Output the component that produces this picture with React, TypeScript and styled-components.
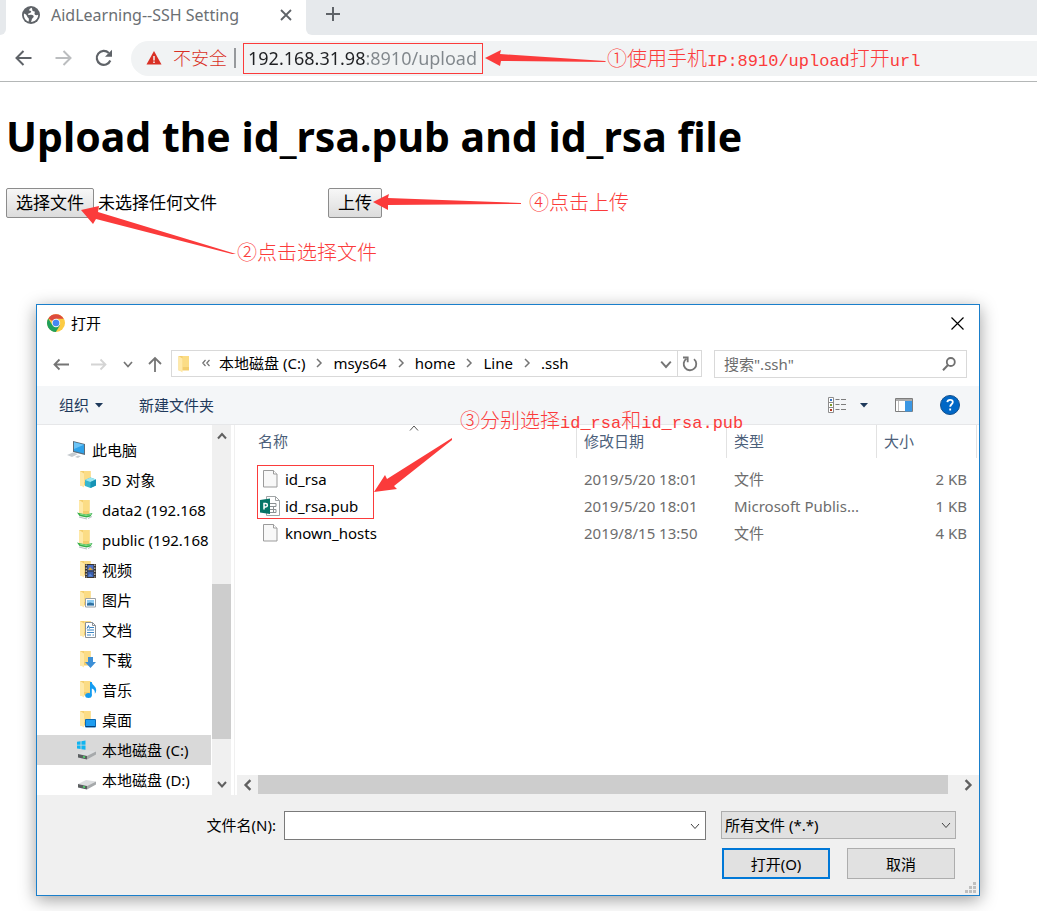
import React, { useRef } from 'react';
import styled, { createGlobalStyle, css } from 'styled-components';

const RED = '#fb3b3b';

const GlobalStyle = createGlobalStyle`
  * { box-sizing: border-box; }
  body {
    margin: 0;
    background: #fff;
    color: #000;
    font-family: "Noto Sans", "Noto Sans CJK SC", sans-serif;
    font-size: 15px;
    line-height: 20px;
  }
  button, input, select { font: inherit; color: inherit; }
`;

/* ---------- shared ---------- */

const IconButton = styled.button`
  display: flex;
  align-items: center;
  justify-content: center;
  flex: none;
  padding: 0;
  border: 0;
  background: none;
`;

const Icon = styled.svg`
  display: block;
  flex: none;
`;

const Note = styled.span`
  color: ${RED};
  font-family: "Noto Sans CJK SC", sans-serif;
  font-weight: 300;
  font-size: 20px;
  line-height: 24px;
  white-space: nowrap;
`;

const Mono = styled.span`
  font-family: "Liberation Mono", monospace;
  font-size: 17px;
`;

const Overlay = styled.div<{ $x: number; $y: number }>`
  position: absolute;
  left: ${(p) => p.$x}px;
  top: ${(p) => p.$y}px;
  display: flex;
  pointer-events: none;
`;

const Arrow = ({ w, h, points }: { w: number; h: number; points: string }) => (
  <Icon width={w} height={h} viewBox={`0 0 ${w} ${h}`} aria-hidden="true">
    <polygon points={points} fill={RED} />
  </Icon>
);

/* ---------- browser frame ---------- */

const TabStrip = styled.div`
  display: flex;
  height: 35px;
  background: #e6e9ec;
`;

const TabEdge = styled.div<{ $side: 'left' | 'right' }>`
  width: 6px;
  background: #fff;
  &::before {
    content: "";
    display: block;
    height: 100%;
    background: #e6e9ec;
    border-radius: ${(p) => (p.$side === 'left' ? '0 0 6px 0' : '0 0 0 8px')};
  }
`;

const Tab = styled.div`
  display: flex;
  align-items: center;
  width: 300px;
  padding: 0 14px 6px 15px;
  background: #fff;
  color: #6b6f73;
  font-size: 16px;
`;

const TabTitle = styled.span`
  flex: 1;
  margin-left: 10px;
  white-space: nowrap;
`;

const NewTab = styled(IconButton)`
  margin-left: 13px;
  padding-bottom: 7px;
`;

const Toolbar = styled.div`
  display: flex;
  align-items: center;
  height: 47px;
  padding-left: 14px;
  border-bottom: 1px solid #b4b7b7;
`;

const ToolButtons = styled.div`
  display: flex;
  gap: 20px;
  margin-right: 17px;
`;

const Omnibox = styled.div`
  display: flex;
  align-items: center;
  flex: 1;
  height: 35px;
  padding-left: 15px;
  border-radius: 18px 0 0 18px;
  background: #f1f3f4;
`;

const Insecure = styled.span`
  margin-left: 11px;
  color: #d93025;
  font-size: 18px;
  font-weight: 300;
`;

const Divider = styled.span`
  width: 2px;
  height: 20px;
  margin: 0 7px;
  background: #96999c;
`;

const UrlInput = styled.input`
  width: 240px;
  height: 31px;
  padding: 0 4px;
  border: 1px solid ${RED};
  outline: 0;
  font-size: 18px;
  color: transparent;
  background: linear-gradient(90deg, #202124 121px, #80868b 121px);
  background-clip: text;
  -webkit-background-clip: text;
`;

const UrlHint = styled.div`
  display: flex;
  align-items: center;
  padding-top: 4px;
`;

/* ---------- page ---------- */

const Heading = styled.h1`
  margin: 26px 6px 24px;
  font-size: 41px;
  line-height: 56px;
  font-weight: 700;
`;

const UploadForm = styled.form`
  position: relative;
  display: flex;
  align-items: center;
  margin: 0 6px;
`;

const FilePicker = styled.div`
  display: flex;
  align-items: center;
  gap: 4px;
  width: 322px;
  font-size: 17px;
`;

const HiddenFile = styled.input`
  display: none;
`;

const FormButton = styled.button`
  height: 30px;
  padding: 0 9px;
  border: 1px solid #8c8c8c;
  border-radius: 2px;
  background: linear-gradient(#f7f7f7, #dcdcdc);
  font-size: 17px;
`;

/* ---------- dialog ---------- */

const Dialog = styled.section`
  position: relative;
  margin: 86px 57px 15px 36px;
  border: 1px solid #1a7fcb;
  background: #fff;
  box-shadow: 0 4px 16px rgba(0, 0, 0, 0.38);
`;

const TitleBar = styled.header`
  display: flex;
  align-items: center;
  gap: 6px;
  height: 36px;
  padding: 0 15px 0 10px;
`;

const Title = styled.h2`
  flex: 1;
  margin: 0;
  font-size: 15px;
  font-weight: 400;
`;

const NavRow = styled.div`
  display: flex;
  align-items: center;
  height: 45px;
  padding: 0 12px 0 16px;
`;

const NavButtons = styled.div`
  display: flex;
  align-items: center;
  gap: 15px;
  margin-right: 9px;
`;

const AddressBar = styled.nav`
  display: flex;
  align-items: center;
  flex: 1;
  height: 27px;
  padding-left: 5px;
  border: 1px solid #d9d9d9;
`;

const Crumb = styled.button`
  padding: 0;
  border: 0;
  background: none;
  white-space: nowrap;
`;

const Crumbs = styled.div`
  display: flex;
  align-items: center;
  flex: 1;
  gap: 9px;
  margin-left: 11px;
  padding-bottom: 2px;
`;

const RefreshButton = styled(IconButton)`
  width: 24px;
  height: 25px;
  margin-left: 5px;
  border-left: 1px solid #d9d9d9;
`;

const SearchBox = styled.label`
  display: flex;
  align-items: center;
  width: 253px;
  height: 28px;
  margin-left: 12px;
  padding: 0 10px 0 9px;
  border: 1px solid #d9d9d9;
`;

const BareInput = styled.input`
  flex: 1;
  min-width: 0;
  height: 100%;
  padding: 0;
  border: 0;
  outline: 0;
  background: none;
  &::placeholder { color: #6d6d6d; opacity: 1; }
`;

const CommandBar = styled.div`
  display: flex;
  align-items: center;
  height: 39px;
  padding: 0 19px 0 22px;
  border-bottom: 1px solid #e6e7e9;
  background: #f4f6f8;
  color: #1e395b;
`;

const Command = styled.button`
  display: flex;
  align-items: center;
  gap: 6px;
  margin-right: 36px;
  padding: 0;
  border: 0;
  background: none;
`;

const CommandIcons = styled.div`
  display: flex;
  align-items: center;
  gap: 27px;
  margin-left: auto;
`;

const ViewButton = styled(IconButton)`
  gap: 14px;
`;

const DialogBody = styled.div`
  display: flex;
`;

const Tree = styled.ul`
  width: 174px;
  margin: 0;
  padding: 10px 0 0;
  list-style: none;
`;

const TreeRow = styled.li<{ $level: number; $selected?: boolean }>`
  display: flex;
  align-items: center;
  gap: 5px;
  height: 30px;
  padding-left: ${(p) => (p.$level === 0 ? 30 : 40)}px;
  background: ${(p) => (p.$selected ? '#d9d9d9' : 'transparent')};
  white-space: nowrap;
`;

const scroll = css`
  display: flex;
  flex: none;
  background: #f0f0f0;
`;

const VScroll = styled.div`
  ${scroll}
  flex-direction: column;
  width: 19px;
  margin: 0 3px 0 1px;
`;

const VThumb = styled.div`
  height: 155px;
  margin: auto 0 33px;
  background: #cdcdcd;
`;

const HScroll = styled.div`
  ${scroll}
  height: 20px;
  margin: auto 0 0 2px;
`;

const HThumb = styled.div`
  flex: 1;
  height: 19px;
  background: #cdcdcd;
`;

const ScrollButton = styled(IconButton)<{ $w: number; $h: number }>`
  width: ${(p) => p.$w}px;
  height: ${(p) => p.$h}px;
`;

const Files = styled.div`
  position: relative;
  display: flex;
  flex-direction: column;
  flex: 1;
  border-left: 1px solid #f0f0f0;
`;

const FileTable = styled.table`
  width: calc(100% - 2px);
  border-collapse: collapse;
  table-layout: fixed;
  color: #6d6d6d;
`;

const HeadCell = styled.th<{ $w?: number; $first?: boolean }>`
  width: ${(p) => (p.$w ? `${p.$w}px` : 'auto')};
  padding: 0 0 7px;
  text-align: left;
  font-weight: 400;
  color: #4c607a;
  & > div {
    height: 33px;
    padding: 6px 0 0 ${(p) => (p.$first ? 23 : 7)}px;
    border-right: 1px solid #e2e2e2;
  }
`;

const Cell = styled.td<{ $right?: boolean }>`
  height: 27px;
  padding: 0 10px 0 7px;
  text-align: ${(p) => (p.$right ? 'right' : 'left')};
  white-space: nowrap;
`;

const FileName = styled.div`
  display: flex;
  align-items: center;
  gap: 3px;
  padding-left: 18px;
  color: #000;
`;

const SortMark = styled.div`
  position: absolute;
  left: 174px;
  top: -2px;
`;

const Highlight = styled.div`
  position: absolute;
  left: 22px;
  top: 40px;
  width: 117px;
  height: 54px;
  border: 1px solid ${RED};
`;

const Footer = styled.footer`
  position: relative;
  padding: 16px 23px 16px 0;
  background: #f0f0f0;
`;

const FooterRow = styled.div`
  display: flex;
  align-items: flex-start;
`;

const NameLabel = styled.label`
  width: 239px;
  margin-right: 8px;
  line-height: 29px;
  text-align: right;
`;

const NameBox = styled.div`
  display: flex;
  flex: 1;
  height: 29px;
  margin-right: 15px;
  padding: 0 5px 0 4px;
  border: 1px solid #7a7a7a;
  background: #fff;
`;

const TypeBox = styled.div`
  position: relative;
  width: 235px;
`;

const TypeSelect = styled.select`
  width: 100%;
  height: 28px;
  padding: 0 3px;
  border: 1px solid #adadad;
  border-radius: 0;
  background: #e1e1e1;
  appearance: none;
`;

const SelectMark = styled.div`
  position: absolute;
  right: 5px;
  top: 9px;
  pointer-events: none;
`;

const Actions = styled.div`
  display: flex;
  justify-content: flex-end;
  gap: 17px;
  margin: 8px 1px 0 0;
`;

const ActionButton = styled.button<{ $primary?: boolean }>`
  width: 108px;
  height: 31px;
  padding: 0;
  border: ${(p) => (p.$primary ? '2px solid #0078d7' : '1px solid #adadad')};
  background: #e1e1e1;
`;

const Grip = styled.div`
  position: absolute;
  right: 3px;
  bottom: 2px;
`;

/* ---------- icons ---------- */

const Chevron = ({ dir, size = 10, color = '#606060', stroke = 2 }: { dir: 'up' | 'down' | 'left' | 'right'; size?: number; color?: string; stroke?: number }) => {
  const d = { up: 'M1 7.5 5 3 9 7.5', down: 'M1 3 5 7.5 9 3', left: 'M7 1 3 5 7 9', right: 'M3 1 7 5 3 9' }[dir];
  return (
    <Icon width={size} height={size} viewBox="0 0 10 10" fill="none" stroke={color} strokeWidth={stroke}>
      <path d={d} />
    </Icon>
  );
};

const Triangle = () => (
  <Icon width="8" height="5" viewBox="0 0 8 5"><path d="M0 0h8L4 4.5z" fill="#1e395b" /></Icon>
);

const FolderShape = () => (
  <>
    <path d="M2 1h10.500v14.500H2z" fill="#f3cd6c" />
    <path d="M6 1h6.500v11H6z" fill="#fbdc85" />
    <path d="M2 1l4 2.500v14L2 15z" fill="#ffe9a8" />
  </>
);

const overlays: Record<string, React.ReactNode> = {
  cube: (
    <>
      <path d="M7 10l5.500-2.500L18 9.500v6L12.500 18 7 16z" fill="#35b6cf" />
      <path d="M7 10l5.500 2 5.500-2.500-5.500-2z" fill="#9be6f0" />
      <path d="M12.500 12v6L18 15.500v-6z" fill="#1793b5" />
    </>
  ),
  net: (
    <>
      <path d="M0 12.500l3 .8 6 1.200 6.500-1.500-2 3.500-4 1-7-1.500z" fill="#36b04a" />
      <path d="M3 14l6 1.500 5-1" stroke="#8be08f" fill="none" />
      <path d="M2 17l8 2M11 18.500l4-2" stroke="#b6bcc0" fill="none" />
    </>
  ),
  film: (
    <>
      <path d="M7 4h11v14H7z" fill="#39342f" />
      <path d="M9.500 5h6v5.500h-6z" fill="#4b6fc4" />
      <path d="M9.500 11.500h6v5.500h-6z" fill="#3b5fae" />
      <path d="M10 10l2-3 3 3z" fill="#d8a43c" />
      <path d="M10 16.500l2-3 3 3z" fill="#5b8ad8" />
      <path d="M8.200 4.500v13M16.800 4.500v13" stroke="#e8e6e0" strokeDasharray="1.500 1.500" />
    </>
  ),
  picture: (
    <>
      <path d="M7.500 8.500h10v8.500h-10z" fill="#fff" stroke="#9aa0a6" />
      <path d="M9 10h7v5.500H9z" fill="#8ccbf2" />
      <path d="M9 13.500l3-1 4 1v2H9z" fill="#2f6f9f" />
    </>
  ),
  doc: (
    <>
      <path d="M7.500 2.500h7l3 3v12h-10z" fill="#fff" stroke="#8b9197" />
      <path d="M14.500 2.500v3h3" fill="none" stroke="#8b9197" />
      <path d="M12 7.500h4M9 10h7M9 12.500h7M9 15h4M14.500 15H16" stroke="#3b85c4" />
      <path d="M9 8.500l1.500-3 1 3" fill="none" stroke="#2672b8" />
    </>
  ),
  down: <path d="M10 7h5v5h3l-5.500 6L7 12h3z" fill="#3d8fd6" />,
  music: (
    <>
      <ellipse cx="10.500" cy="15.500" rx="3.300" ry="2.500" fill="#149cf0" />
      <path d="M12 2h1.800c.4 3.500 4.400 4 4.400 8 0 1.500-.6 3-1.400 3.700.5-3.500-1.300-4.700-3-5.200v7H12z" fill="#149cf0" />
    </>
  ),
  desktop: (
    <>
      <path d="M7.500 9.500h10v7.500h-10z" fill="#1e9df0" stroke="#0b6ab5" />
      <path d="M8 16.500h9" stroke="#0d3f73" />
    </>
  ),
};

const DriveShape = () => (
  <>
    <path d="M1 14l8-4 10 1.500-9 4.500z" fill="#dcdee0" />
    <path d="M1 14l9 2v3.500l-9-2z" fill="#5a5e60" />
    <path d="M10 16l9-4.500v3L10 19.500z" fill="#a6a9ab" />
    <path d="M6 16.800l2 .5" stroke="#4be36a" strokeWidth="1.500" />
  </>
);

const TreeIcon = ({ kind }: { kind: string }) => {
  if (kind === 'pc') {
    return (
      <Icon width="20" height="20" viewBox="0 0 20 20">
        <path d="M6 1l12 3v11L6 12z" fill="#5c6d7a" />
        <path d="M7 2.300l10 2.500v8.700L7 11z" fill="#2ea2ea" />
        <path d="M7 2.300l10 2.500L7 9z" fill="#6cc4f7" />
        <path d="M0 15l6-2.500 5 1.500-6 3zM8 17l3-1.500 3 .5-3 2z" fill="#c6cbcf" />
      </Icon>
    );
  }
  if (kind === 'drive' || kind === 'windrive') {
    return (
      <Icon width="20" height="20" viewBox="0 0 20 20">
        <DriveShape />
        {kind === 'windrive' && <path d="M0 1.800l3.600-.5v3.500H0zM4.400 1.200L8.500.6v4.200H4.400zM0 5.600h3.600v3.500L0 8.600zM4.400 5.600h4.100v4.200l-4.100-.6z" fill="#10b4f0" />}
      </Icon>
    );
  }
  return (
    <Icon width="20" height="20" viewBox="0 0 20 20">
      {kind === 'net' ? <g transform="translate(0 -1)"><FolderShape /></g> : <g transform="translate(1 0)"><FolderShape /></g>}
      {kind === 'net' ? overlays[kind] : <g transform="translate(1 0)">{overlays[kind]}</g>}
    </Icon>
  );
};

const FileIcon = ({ publisher }: { publisher?: boolean }) => (
  <Icon width="22" height="20" viewBox="0 0 22 20">
    {publisher ? (
      <>
        <path d="M6.500.5h9l4 4v15h-13z" fill="#fff" stroke="#a0a4a6" />
        <path d="M15.500.5v4h4" fill="none" stroke="#a0a4a6" />
        <path d="M10 7.500h6v3h-6M10 13.500h6M10 16.500h6v-3M13.500 10.500v6" fill="none" stroke="#8c9194" />
        <path d="M0 4l10-1.500v15.500L0 16.500z" fill="#077568" />
        <path d="M4 13.500V7.500h1.700a1.700 1.700 0 010 3.400H4" fill="none" stroke="#fff" strokeWidth="1.500" />
      </>
    ) : (
      <>
        <path d="M3.500 1.500h10l3.500 3.500v13H3.500z" fill="#f8f8f8" stroke="#9b9b9b" />
        <path d="M13.500 1.500V5H17" fill="#fff" stroke="#9b9b9b" />
      </>
    )}
  </Icon>
);

/* ---------- data ---------- */

const treeItems = [
  { kind: 'pc', label: '此电脑', level: 0 },
  { kind: 'cube', label: '3D 对象', level: 1 },
  { kind: 'net', label: 'data2 (192.168', level: 1 },
  { kind: 'net', label: 'public (192.168', level: 1 },
  { kind: 'film', label: '视频', level: 1 },
  { kind: 'picture', label: '图片', level: 1 },
  { kind: 'doc', label: '文档', level: 1 },
  { kind: 'down', label: '下载', level: 1 },
  { kind: 'music', label: '音乐', level: 1 },
  { kind: 'desktop', label: '桌面', level: 1 },
  { kind: 'windrive', label: '本地磁盘 (C:)', level: 1, selected: true },
  { kind: 'drive', label: '本地磁盘 (D:)', level: 1 },
];

const files = [
  { name: 'id_rsa', date: '2019/5/20 18:01', type: '文件', size: '2 KB' },
  { name: 'id_rsa.pub', date: '2019/5/20 18:01', type: 'Microsoft Publis...', size: '1 KB', publisher: true },
  { name: 'known_hosts', date: '2019/8/15 13:50', type: '文件', size: '4 KB' },
];

const crumbs = ['本地磁盘 (C:)', 'msys64', 'home', 'Line', '.ssh'];

/* ---------- sections ---------- */

const BrowserFrame = () => (
  <header>
    <TabStrip>
      <TabEdge $side="left" />
      <Tab>
        <Icon width="20" height="20" viewBox="0 0 20 20">
          <circle cx="10" cy="10" r="9" fill="#5f6368" />
          <path d="M10.500 2.800c-1 .6-2.600 1.500-2.200 2.500.3.800 1.600.3 1.900 1.200.3 1-1.700 1.600-2.700 2-.9.500-.4 1.700.6 1.500 1.700-.3 3.200-.6 4.200.5.8 1 .3 2-.6 2.600-1 .7-.9 2.200-1.700 3.900 4-.2 7.200-3.200 7.200-7.200-1.300.8-3 .6-3.600-.5-.5-1 .7-1.800 0-2.700-.7-.8-1.800-.3-2.200-1.200-.3-.9.200-1.700-.9-2.600z" fill="#fff" />
          <path d="M3 8.500c1.500.3 2.800 1.500 3.200 3 .3 1.400 1.600 1.300 1.700 2.500l-.2 2.600C4.600 15.700 2.300 12.500 3 8.500z" fill="#fff" />
        </Icon>
        <TabTitle>AidLearning--SSH Setting</TabTitle>
        <IconButton aria-label="关闭标签页">
          <Icon width="12" height="12" viewBox="0 0 12 12" stroke="#5f6368" strokeWidth="1.800"><path d="M1 1l10 10M11 1L1 11" /></Icon>
        </IconButton>
      </Tab>
      <TabEdge $side="right" />
      <NewTab aria-label="新标签页">
        <Icon width="16" height="16" viewBox="0 0 16 16" stroke="#5f6368" strokeWidth="2"><path d="M8 1v14M1 8h14" /></Icon>
      </NewTab>
    </TabStrip>
    <Toolbar>
      <ToolButtons>
        <IconButton aria-label="后退">
          <Icon width="20" height="20" viewBox="0 0 20 20" fill="none" stroke="#5f6368" strokeWidth="2"><path d="M17.500 10H3M9.500 3L2.500 10l7 7" /></Icon>
        </IconButton>
        <IconButton aria-label="前进">
          <Icon width="20" height="20" viewBox="0 0 20 20" fill="none" stroke="#bbbdbf" strokeWidth="2"><path d="M1.500 10H16M9.500 3l7 7-7 7" /></Icon>
        </IconButton>
        <IconButton aria-label="重新加载">
          <Icon width="20" height="20" viewBox="0 0 20 20" fill="none" stroke="#5f6368" strokeWidth="2.200">
            <path d="M16.300 12.500A7 7 0 1 1 14.800 5" />
            <path d="M18 1.800v7h-7z" fill="#5f6368" stroke="none" />
          </Icon>
        </IconButton>
      </ToolButtons>
      <Omnibox>
        <Icon width="16" height="16" viewBox="0 0 16 16">
          <path d="M8 1l7.500 13.500H.5z" fill="#d93025" />
          <path d="M8 6v4.500M8 11.500v1.500" stroke="#f1f3f4" strokeWidth="1.500" />
        </Icon>
        <Insecure>不安全</Insecure>
        <Divider />
        <UrlInput aria-label="地址" defaultValue="192.168.31.98:8910/upload" spellCheck={false} />
        <Arrow w={124} h={18} points="2,9 18,1 17,5 122,12 123,13 18,12 17,17" />
        <UrlHint>
          <Note>①使用手机<Mono>IP:8910/upload</Mono>打开<Mono>url</Mono></Note>
        </UrlHint>
      </Omnibox>
    </Toolbar>
  </header>
);

const UploadSection = () => {
  const picker = useRef<HTMLInputElement>(null);
  return (
    <UploadForm onSubmit={(e) => e.preventDefault()}>
      <FilePicker>
        <FormButton type="button" onClick={() => picker.current?.click()}>选择文件</FormButton>
        <HiddenFile ref={picker} type="file" aria-label="选择文件" />
        <span>未选择任何文件</span>
      </FilePicker>
      <FormButton type="submit">上传</FormButton>
      <Overlay $x={366} $y={5}>
        <Arrow w={152} h={18} points="1,9 17,1 16,5 149,10 149,11 16,12 16,17" />
      </Overlay>
      <Overlay $x={523} $y={2}><Note>④点击上传</Note></Overlay>
      <Overlay $x={74} $y={17}>
        <Arrow w={156} h={52} points="1,5 19,1 18,7 156,49 152,49 16,14 13,19" />
      </Overlay>
      <Overlay $x={231} $y={52}><Note>②点击选择文件</Note></Overlay>
    </UploadForm>
  );
};

const OpenDialog = () => (
  <Dialog role="dialog" aria-labelledby="dialog-title">
    <TitleBar>
      <Icon width="18" height="18" viewBox="0 0 18 18">
        <circle cx="9" cy="9" r="9" fill="#fccb43" />
        <path d="M9 9L1.200 4.500A9 9 0 0 1 16.800 4.800H9z" fill="#dd4b3e" />
        <path d="M1.200 4.500A9 9 0 0 0 8.800 18L13 11.200 9 9 5.300 11z" fill="#1fa05c" />
        <circle cx="9" cy="9" r="4.200" fill="#f3f3f3" />
        <circle cx="9" cy="9" r="3.300" fill="#4687f1" />
      </Icon>
      <Title id="dialog-title">打开</Title>
      <IconButton aria-label="关闭">
        <Icon width="13" height="13" viewBox="0 0 13 13" stroke="#000" strokeWidth="1.200"><path d="M.5.5l12 12M12.500.5l-12 12" /></Icon>
      </IconButton>
    </TitleBar>

    <NavRow>
      <NavButtons>
        <IconButton aria-label="返回">
          <Icon width="16" height="16" viewBox="0 0 16 16" fill="none" stroke="#757575" strokeWidth="1.800"><path d="M16 8.500H1.500M6.500 3.500l-5 5 5 5" /></Icon>
        </IconButton>
        <IconButton aria-label="前进">
          <Icon width="24" height="16" viewBox="-7 0 24 16" fill="none" stroke="#d4d4d4" strokeWidth="1.800"><path d="M0 8.500h14.500M9.500 3.500l5 5-5 5" /></Icon>
        </IconButton>
        <IconButton aria-label="最近位置"><Chevron dir="down" color="#757575" stroke={1.700} /></IconButton>
        <IconButton aria-label="上移">
          <Icon width="14" height="16" viewBox="0 0 14 16" fill="none" stroke="#757575" strokeWidth="1.800"><path d="M7 16V2M1 8l6-6 6 6" /></Icon>
        </IconButton>
      </NavButtons>
      <AddressBar aria-label="路径">
        <Icon width="14" height="18" viewBox="1 0 13 18"><FolderShape /></Icon>
        <Crumbs>
          <Icon width="8" height="8" viewBox="0 0 8 8" fill="none" stroke="#707070" strokeWidth="1.200"><path d="M3.500 1L.8 4l2.700 3M7.500 1L4.800 4l2.700 3" /></Icon>
          {crumbs.map((c, i) => (
            <React.Fragment key={c}>
              {i > 0 && <Chevron dir="right" color="#757575" stroke={1.500} />}
              <Crumb>{c}</Crumb>
            </React.Fragment>
          ))}
        </Crumbs>
        <IconButton aria-label="展开"><Chevron dir="down" size={12} color="#757575" stroke={1.600} /></IconButton>
        <RefreshButton aria-label="刷新">
          <Icon width="16" height="16" viewBox="0 0 16 16" fill="none" stroke="#757575" strokeWidth="1.800">
            <path d="M4.500 2.700a6.300 6.300 0 1 0 7.500.4" />
            <path d="M1 1.500h4.700v4.700" />
          </Icon>
        </RefreshButton>
      </AddressBar>
      <SearchBox>
        <BareInput aria-label="搜索" placeholder={'搜索".ssh"'} />
        <Icon width="14" height="14" viewBox="0 0 14 14" fill="none" stroke="#707070" strokeWidth="1.800">
          <circle cx="8.800" cy="5" r="4" />
          <path d="M6 8L1 13.200" strokeWidth="2" />
        </Icon>
      </SearchBox>
    </NavRow>

    <CommandBar>
      <Command>组织<Triangle /></Command>
      <Command>新建文件夹</Command>
      <CommandIcons>
        <ViewButton aria-label="更改视图">
          <Icon width="18" height="16" viewBox="0 0 18 16">
            <path d="M.5.5h5v15h-5zM.5 5.500h5M.5 10.500h5" fill="#fff" stroke="#8d8d8d" />
            <path d="M2 2h2v2H2z" fill="#3774c4" /><path d="M2 7h2v2H2z" fill="#7c9a2b" /><path d="M2 12h2v2H2z" fill="#b5371d" />
            <path d="M7.500 2.500h4M13 2.500h5M7.500 7.500h4M13 7.500h5M7.500 12.500h4M13 12.500h5" stroke="#7d7d7d" />
          </Icon>
          <Triangle />
        </ViewButton>
        <IconButton aria-label="预览窗格">
          <Icon width="18" height="14" viewBox="0 0 18 14">
            <path d="M.5.5h17v13H.5z" fill="#fff" stroke="#7d7d7d" />
            <path d="M1 2h16" stroke="#8f8f8f" strokeWidth="1.500" />
            <path d="M3.500 3v10" stroke="#bdbdbd" />
            <path d="M10 3h7v10.500h-7z" fill="#3b97e3" />
          </Icon>
        </IconButton>
        <IconButton aria-label="帮助">
          <Icon width="20" height="20" viewBox="0 0 20 20">
            <circle cx="10" cy="10" r="9.500" fill="#0067c6" stroke="#134f8c" />
            <path d="M7.300 7.200c.2-1.600 1.300-2.400 2.800-2.400s2.700.9 2.700 2.300c0 2.100-2.600 2.200-2.600 4.600M10.200 13.500v1.900" fill="none" stroke="#fff" strokeWidth="1.800" />
          </Icon>
        </IconButton>
      </CommandIcons>
    </CommandBar>

    <DialogBody>
      <Tree>
        {treeItems.map((t) => (
          <TreeRow key={t.label} $level={t.level} $selected={t.selected}>
            <TreeIcon kind={t.kind} />
            {t.label}
          </TreeRow>
        ))}
      </Tree>
      <VScroll>
        <ScrollButton $w={19} $h={22} aria-label="向上滚动"><Chevron dir="up" /></ScrollButton>
        <VThumb />
        <ScrollButton $w={19} $h={23} aria-label="向下滚动"><Chevron dir="down" /></ScrollButton>
      </VScroll>
      <Files>
        <FileTable>
          <thead>
            <tr>
              <HeadCell $first><div>名称</div></HeadCell>
              <HeadCell $w={150}><div>修改日期</div></HeadCell>
              <HeadCell $w={150}><div>类型</div></HeadCell>
              <HeadCell $w={100}><div>大小</div></HeadCell>
            </tr>
          </thead>
          <tbody>
            {files.map((f) => (
              <tr key={f.name}>
                <Cell><FileName><FileIcon publisher={f.publisher} />{f.name}</FileName></Cell>
                <Cell>{f.date}</Cell>
                <Cell>{f.type}</Cell>
                <Cell $right>{f.size}</Cell>
              </tr>
            ))}
          </tbody>
        </FileTable>
        <SortMark><Chevron dir="up" color="#555" stroke={1} /></SortMark>
        <Highlight />
        <Overlay $x={138} $y={12}>
          <Arrow w={80} h={56} points="1,55 12,38 14,42 79,1 79,3 21,49 24,52" />
        </Overlay>
        <Overlay $x={225} $y={-17}>
          <Note>③分别选择<Mono>id_rsa</Mono>和<Mono>id_rsa.pub</Mono></Note>
        </Overlay>
        <HScroll>
          <ScrollButton $w={21} $h={19} aria-label="向左滚动"><Chevron dir="left" size={12} /></ScrollButton>
          <HThumb />
          <ScrollButton $w={31} $h={19} aria-label="向右滚动"><Icon width="8" height="1" /><Chevron dir="right" size={12} /></ScrollButton>
        </HScroll>
      </Files>
    </DialogBody>

    <Footer>
      <FooterRow>
        <NameLabel htmlFor="file-name">文件名(N):</NameLabel>
        <NameBox>
          <BareInput id="file-name" />
          <IconButton aria-label="历史记录"><Chevron dir="down" color="#404040" stroke={1} /></IconButton>
        </NameBox>
        <TypeBox>
          <TypeSelect aria-label="文件类型"><option>所有文件 (*.*)</option></TypeSelect>
          <SelectMark><Chevron dir="down" color="#404040" stroke={1} /></SelectMark>
        </TypeBox>
      </FooterRow>
      <Actions>
        <ActionButton $primary>打开(O)</ActionButton>
        <ActionButton>取消</ActionButton>
      </Actions>
      <Grip>
        <Icon width="11" height="11" viewBox="0 0 11 11">
          <path d="M8 0h3v3H8zM4 4h3v3H4zM8 4h3v3H8zM0 8h3v3H0zM4 8h3v3H4zM8 8h3v3H8z" fill="#bfbfbf" />
        </Icon>
      </Grip>
    </Footer>
  </Dialog>
);

export default function App() {
  return (
    <>
      <GlobalStyle />
      <BrowserFrame />
      <main>
        <Heading>Upload the id_rsa.pub and id_rsa file</Heading>
        <UploadSection />
        <OpenDialog />
      </main>
    </>
  );
}
